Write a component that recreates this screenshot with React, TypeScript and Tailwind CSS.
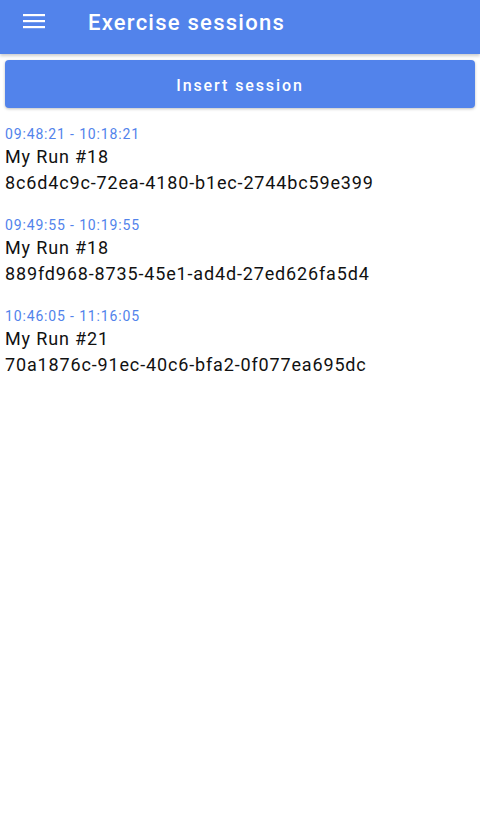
const SESSIONS = [
  { time: "09:48:21 - 10:18:21", name: "My Run #18", id: "8c6d4c9c-72ea-4180-b1ec-2744bc59e399" },
  { time: "09:49:55 - 10:19:55", name: "My Run #18", id: "889fd968-8735-45e1-ad4d-27ed626fa5d4" },
  { time: "10:46:05 - 11:16:05", name: "My Run #21", id: "70a1876c-91ec-40c6-bfa2-0f077ea695dc" },
];

export default function App() {
  return (
    <div className="min-h-[837px] bg-white font-['Roboto',sans-serif]">
      {/* Top bar */}
      <header className="flex h-[54px] items-center bg-[#5283eb] shadow-[0_2px_3px_rgba(0,0,0,0.2)]">
        <div className="flex w-[88px] justify-start pl-[23px] pb-[12px]">
          <svg width="22" height="16" viewBox="0 0 22 16" fill="white">
            <rect x="0" y="1" width="22" height="2.2" />
            <rect x="0" y="7" width="22" height="2.2" />
            <rect x="0" y="13" width="22" height="2.2" />
          </svg>
        </div>
        <h1 className="pb-[10px] text-[22px] font-medium tracking-[1.25px] text-white">Exercise sessions</h1>
      </header>

      {/* Insert */}
      <div className="px-[5px] pt-[6px]">
        <button className="h-[48px] w-full rounded-[4px] bg-[#5283eb] pt-[3px] text-[16px] font-medium tracking-[1.9px] text-white shadow-[0_1px_3px_rgba(0,0,0,0.25)]">
          Insert session
        </button>
      </div>

      {/* Session list */}
      <ul className="flex flex-col gap-[19px] px-[5px] pt-[16px]">
        {SESSIONS.map((s) => (
          <li key={s.id} className="flex flex-col">
            <span className="text-[14px] leading-[20px] tracking-[0.85px] text-[#5283eb]">{s.time}</span>
            <span className="text-[18px] leading-[26px] tracking-[0.85px] text-[#111]">{s.name}</span>
            <span className="text-[18px] leading-[26px] tracking-[0.85px] text-[#111]">{s.id}</span>
          </li>
        ))}
      </ul>
    </div>
  );
}
